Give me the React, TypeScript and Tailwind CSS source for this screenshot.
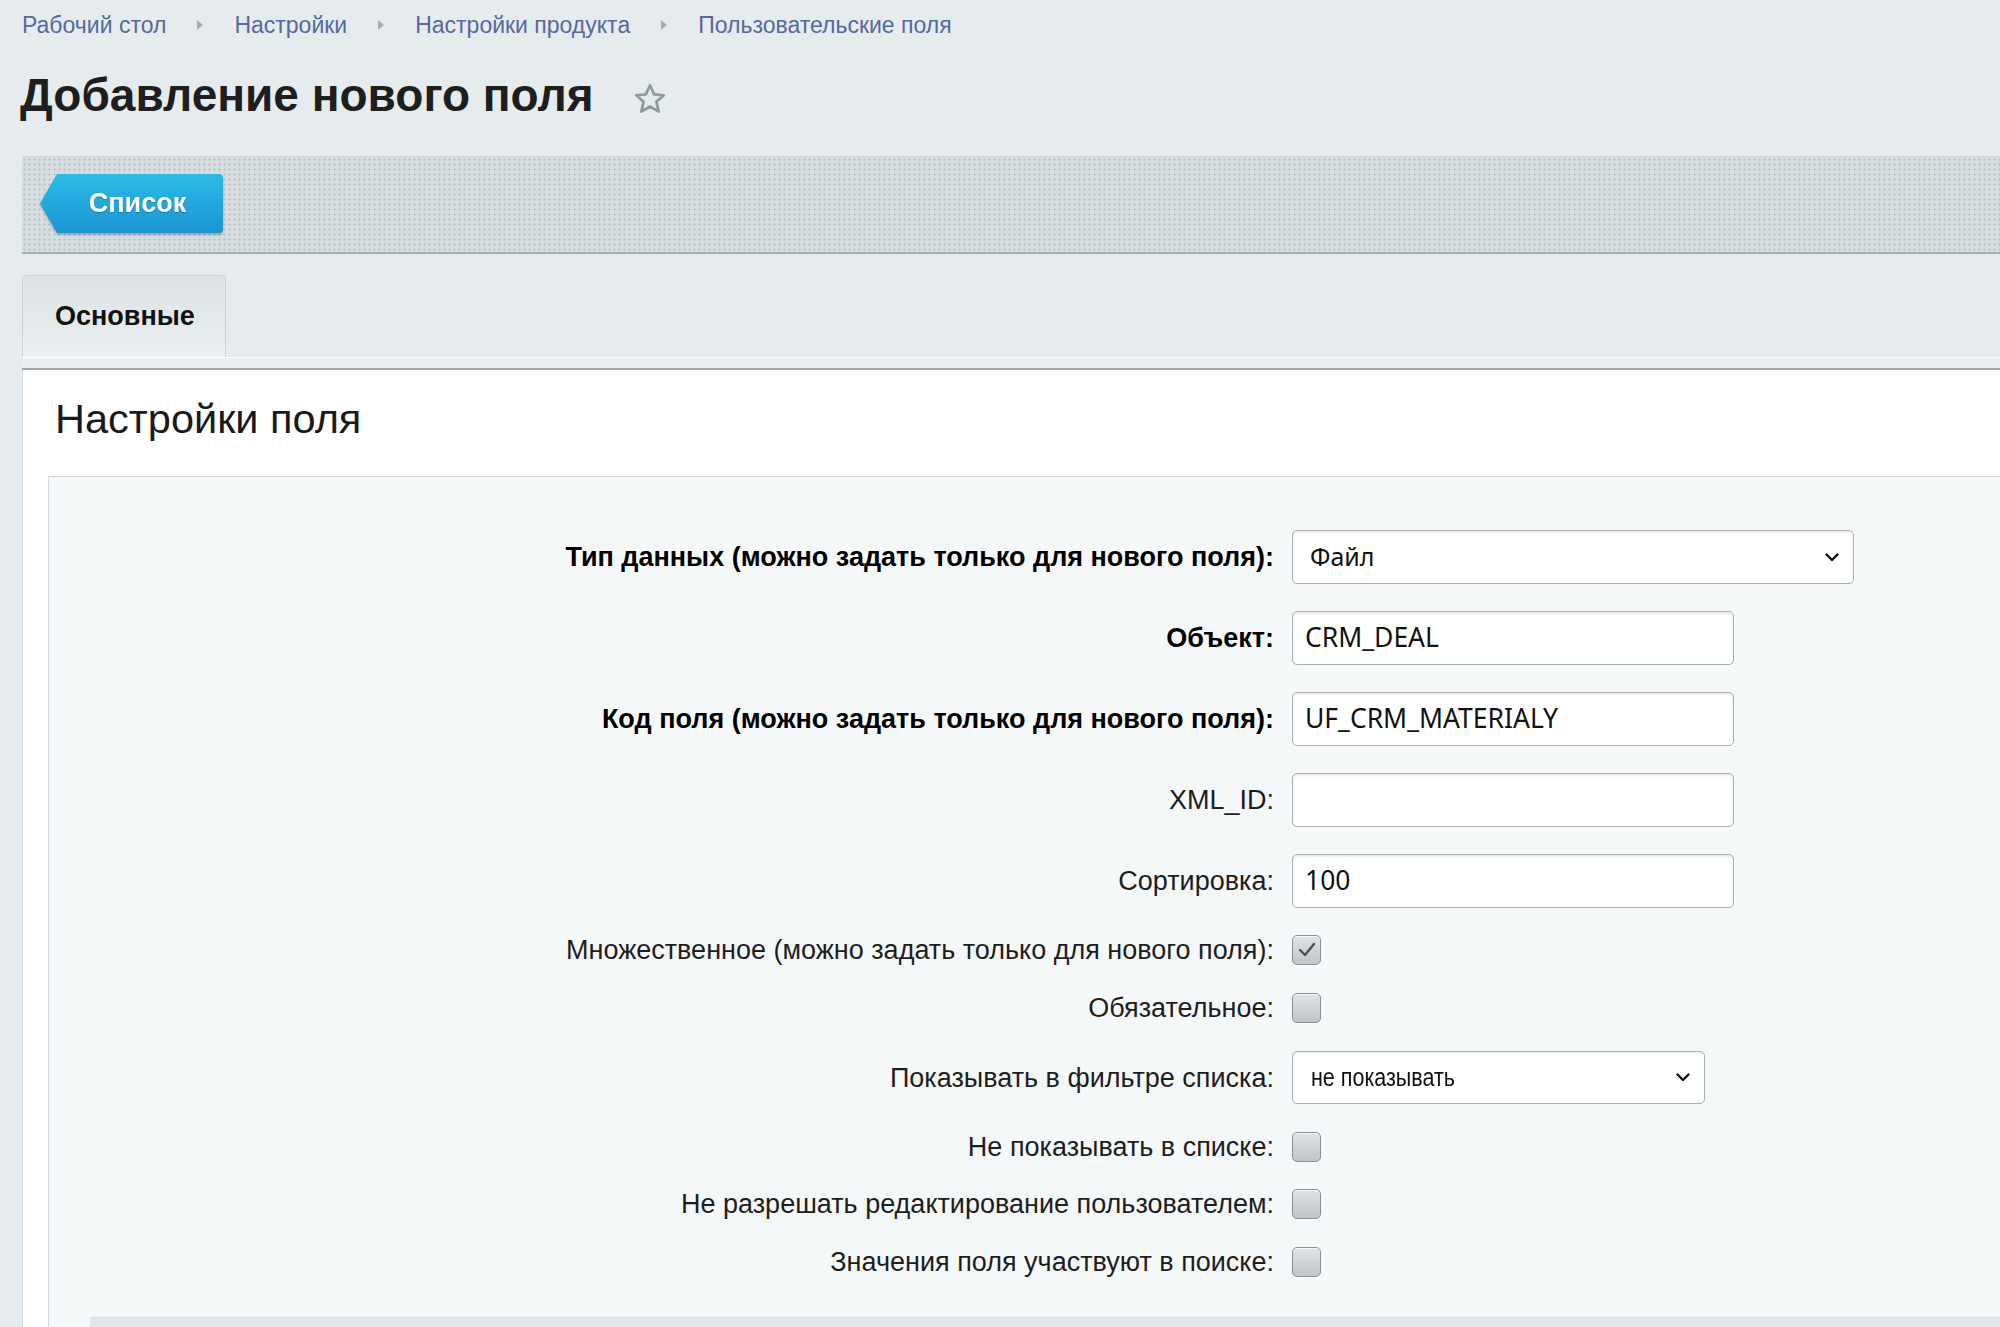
import React from "react";

function Arrow() {
  return (
    <svg width="8" height="12" viewBox="0 0 8 12" className="mx-[30px]">
      <path d="M1 1 L7 6 L1 11 Z" fill="#a3adb2" />
    </svg>
  );
}

function Checkbox({ checked = false }: { checked?: boolean }) {
  return (
    <span className="inline-flex h-[30px] w-[29px] items-center justify-center rounded-[5px] border-[1.5px] border-[#878e93] bg-gradient-to-b from-[#e0e4e6] to-[#c0c5c8] shadow-[inset_0_1px_0_rgba(255,255,255,0.8),0_1px_0_rgba(255,255,255,0.6)]">
      {checked && (
        <svg width="20" height="18" viewBox="0 0 20 18">
          <path d="M3 9 L8 14 L17 3" fill="none" stroke="#4a5054" strokeWidth="2.4" strokeLinecap="round" strokeLinejoin="round" />
        </svg>
      )}
    </span>
  );
}

function Chevron() {
  return (
    <svg width="14" height="9" viewBox="0 0 14 9">
      <path d="M1.5 1.5 L7 7 L12.5 1.5" fill="none" stroke="#111" strokeWidth="2.4" strokeLinecap="round" strokeLinejoin="round" />
    </svg>
  );
}

function Row({ label, bold = false, extra = "", children }: { label: string; bold?: boolean; extra?: string; children: React.ReactNode }) {
  return (
    <div className={"flex items-center " + extra}>
      <div className={"w-[1225px] shrink-0 text-right text-[27px] leading-[30px] " + (bold ? "font-bold text-black" : "text-[#1d1d1d]")}>
        {label}
      </div>
      <div className="ml-[18px] flex items-center">{children}</div>
    </div>
  );
}

function TextInput({ value }: { value: string }) {
  return (
    <div className="flex h-[54px] w-[442px] items-center rounded-[5px] border border-[#a6aeb2] bg-white pl-[12px] font-['Noto_Sans',sans-serif] text-[26.5px] text-[#111] shadow-[inset_0_2px_2px_rgba(0,0,0,0.08)]">
      {value}
    </div>
  );
}

export default function App() {
  return (
    <div className="min-h-[1327px] w-[2000px] overflow-hidden bg-[#e6ecee] font-['Liberation_Sans',Arial,sans-serif] text-black">
      {/* breadcrumb */}
      <nav className="mt-[12px] flex h-[26px] items-center pl-[22px] text-[23px] text-[#55699a]">
        <span>Рабочий стол</span>
        <Arrow />
        <span>Настройки</span>
        <Arrow />
        <span>Настройки продукта</span>
        <Arrow />
        <span>Пользовательские поля</span>
      </nav>

      {/* title */}
      <div className="mt-[29px] flex h-[56px] items-center pl-[20px]">
        <h1 className="text-[46px] font-bold leading-[56px] text-[#1e1e1e]">Добавление нового поля</h1>
        <svg width="36" height="36" viewBox="0 0 24 24" className="ml-[38px] mt-[8px]">
          <path
            d="M12 2.8 L14.7 8.9 L21.2 9.5 L16.3 13.9 L17.8 20.4 L12 17 L6.2 20.4 L7.7 13.9 L2.8 9.5 L9.3 8.9 Z"
            fill="none"
            stroke="#8f999e"
            strokeWidth="1.8"
            strokeLinejoin="round"
          />
        </svg>
      </div>

      {/* toolbar */}
      <div className="ml-[22px] mt-[33px] h-[98px] border-t border-[#cdd5d8] border-b-2 border-b-[#a5afb3] bg-[#d7dee1] bg-[radial-gradient(circle,#b7c1c5_0.9px,transparent_1.3px)] [background-size:5px_5px] pl-[18px] pt-[17px]">
        <div className="inline-block drop-shadow-[0_2px_1px_rgba(0,0,0,0.25)]">
          <div className="flex h-[59px] w-[183px] items-center justify-center rounded-r-[4px] bg-gradient-to-b from-[#2cbbe9] to-[#1a94d2] pl-[12px] text-[27px] font-bold text-white [clip-path:polygon(17px_0,100%_0,100%_100%,17px_100%,0_50%)] [text-shadow:0_1px_1px_rgba(0,0,0,0.25)]">
            Список
          </div>
        </div>
      </div>

      {/* tabs */}
      <div className="ml-[22px] mt-[21px] flex">
        <div className="flex h-[82px] w-[204px] items-center rounded-t-[3px] border border-b-0 border-[#cbd3d6] bg-gradient-to-b from-[#dde3e5] to-[#eaeff1] pl-[32px] text-[27px] font-bold text-[#111]">
          Основные
        </div>
        <div className="flex-1" />
      </div>
      <div className="ml-[22px] h-[13px] border-t border-white bg-[#e9eef0] border-b-2 border-b-[#9ea8ab]" />

      {/* content */}
      <div className="ml-[22px] min-h-[960px] border-l border-[#d3dadd] bg-white">
        <div className="pl-[32px] pt-[24px] text-[41.5px] leading-[50px] text-[#1a1a1a]">Настройки поля</div>
        <div className="ml-[25px] mt-[32px] min-h-[900px] border-l border-t border-[#cfd8dc] bg-[#f5f8f9] pt-[53px]">
          <div className="flex flex-col gap-[27px]">
            <Row label="Тип данных (можно задать только для нового поля):" bold>
              <div className="flex h-[54px] w-[562px] items-center justify-between rounded-[5px] border border-[#a6aeb2] bg-white pl-[17px] pr-[14px] font-['Noto_Sans',sans-serif] text-[25px] text-[#111] shadow-[inset_0_2px_2px_rgba(0,0,0,0.06)]">
                <span>Файл</span>
                <Chevron />
              </div>
            </Row>
            <Row label="Объект:" bold>
              <TextInput value="CRM_DEAL" />
            </Row>
            <Row label="Код поля (можно задать только для нового поля):" bold>
              <TextInput value="UF_CRM_MATERIALY" />
            </Row>
            <Row label="XML_ID:">
              <TextInput value="" />
            </Row>
            <Row label="Сортировка:">
              <TextInput value="100" />
            </Row>
            <Row label="Множественное (можно задать только для нового поля):">
              <Checkbox checked />
            </Row>
            <Row label="Обязательное:" extra="mt-[1px]">
              <Checkbox />
            </Row>
            <Row label="Показывать в фильтре списка:" extra="mt-[1px]">
              <div className="flex h-[53px] w-[413px] items-center justify-between rounded-[5px] border border-[#a6aeb2] bg-white pl-[18px] pr-[14px] text-[25px] text-[#111] shadow-[inset_0_2px_2px_rgba(0,0,0,0.06)]">
                <span className="inline-block origin-left scale-x-[0.86]">не показывать</span>
                <Chevron />
              </div>
            </Row>
            <Row label="Не показывать в списке:" extra="mt-[1px]">
              <Checkbox />
            </Row>
            <Row label="Не разрешать редактирование пользователем:">
              <Checkbox />
            </Row>
            <Row label="Значения поля участвуют в поиске:" extra="mt-[1px]">
              <Checkbox />
            </Row>
          </div>
          <div className="ml-[41px] mt-[40px] h-[60px] border-t border-[#d5dde0] bg-[#e1e7e9]" />
        </div>
      </div>
    </div>
  );
}
